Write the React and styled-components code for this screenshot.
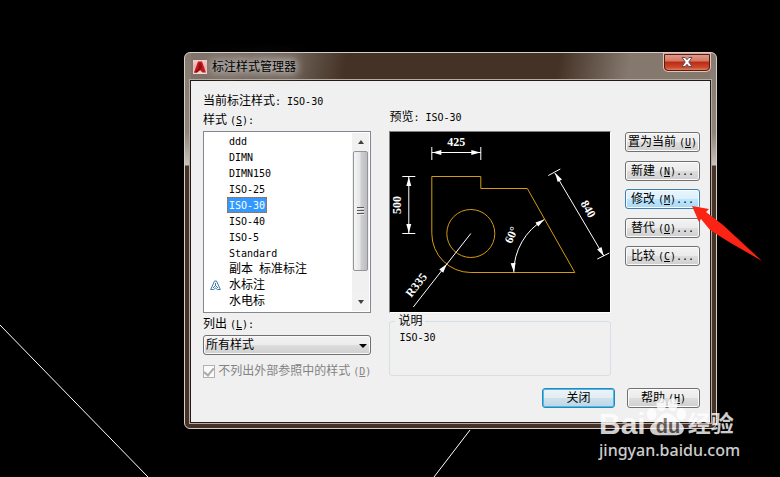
import { useState } from 'react'

import styled, { createGlobalStyle } from 'styled-components'

const styles = ["ddd","DIMN","DIMN150","ISO-25","ISO-30","ISO-40","ISO-5","Standard","副本 标准标注","水标注","水电标"]

const actions = [
  {name:"置为当前",keyName:"U"},
  {name:"新建",keyName:"N",dots:true},
  {name:"修改",keyName:"M",dots:true},
  {name:"替代",keyName:"O",dots:true},
  {name:"比较",keyName:"C",dots:true}
]

const HotKey = ({children,dots,colon}) => (
  <KeyHint>(<u>{children}</u>){dots && "..."}{colon && ":"}</KeyHint>
)

// the ascii parts of a name go in the narrow font
const Mixed = ({text}) => (
  text.split(/([\w -]+)/).map((part,i)=>(i%2 ? <Latin key={i}>{part}</Latin> : part))
)

// arrow head with its tip at x,y, pointing right before it is turned
const Head = ({x,y,angle}) => (
  <path d="M0 0L-9 -2.5V2.5Z" fill="#fff" transform={`translate(${x} ${y}) rotate(${angle})`}/>
)

const DimText = ({x,y,angle=0,children}) => (
  <text className="dim" transform={`translate(${x} ${y}) rotate(${angle})`} y="4" textAnchor="middle">{children}</text>
)

const Drawing = () => (
  <svg viewBox="0 0 219 180" role="img" aria-label="ISO-30">
    <g fill="none" stroke="#d69a10">
      <path d="M41.5 101.5V44.5H90.5V56.5H137L184.5 140.5H80.5A39 39 0 0 1 41.5 101.5Z"/>
      <circle cx="80.5" cy="101.5" r="24"/>
    </g>
    <g fill="none" stroke="#fff">
      <path d="M41.5 15V28M90.5 15V28M41.5 20.5H90.5"/>
      <path d="M12 44.5H25M12 101.5H25M18.5 44.5V101.5"/>
      <path d="M80.5 101.5L23 175"/>
      <path d="M123.5 140.5A61 61 0 0 1 154 87.5"/>
      <path d="M164.5 41L213.5 124M158 43.5L170 37M207 127L219 121"/>
    </g>
    <Head x={42} y={20.5} angle={180}/>
    <Head x={90} y={20.5} angle={0}/>
    <Head x={18.5} y={45} angle={-90}/>
    <Head x={18.5} y={101} angle={90}/>
    <Head x={56.5} y={132} angle={-52}/>
    <Head x={123.5} y={140} angle={86}/>
    <Head x={154} y={87.5} angle={-34}/>
    <Head x={165} y={41} angle={-120}/>
    <Head x={213.5} y={124} angle={60}/>
    <DimText x={66} y={10}>425</DimText>
    <DimText x={7} y={73} angle={-90}>500</DimText>
    <DimText x={26} y={153} angle={-52}>R335</DimText>
    <DimText x={121} y={103} angle={-66}>60°</DimText>
    <DimText x={198} y={77} angle={60}>840</DimText>
  </svg>
)

const App = () => {
  const [selected,setSelected] = useState("ISO-30")

  return (
    <>
    <GlobalStyle/>
    <Desktop>
      <CanvasLines width="780" height="477" aria-hidden="true">
        <path d="M0 325L148 477M470 430L434 477"/>
      </CanvasLines>

      <Dialog>
        <TitleBar>
          <svg width="14" height="14" viewBox="0 0 14 14" aria-hidden="true">
            <defs>
              <linearGradient id="logo" x1="0" y1="0" x2="0" y2="1">
                <stop offset="0" stopColor="#f3d0cd"/>
                <stop offset="0.5" stopColor="#eeb0ac"/>
                <stop offset="1" stopColor="#f0dcda"/>
              </linearGradient>
            </defs>
            <path d="M0 0H14V14H0Z" fill="url(#logo)"/>
            <path d="M5 1.5H9L13 12.5H9.5L7 10L4 12.5H1Z" fill="#c4161c"/>
            <path d="M7 2L9 7L7 10L4 12.5H1L5 9Z" fill="#8f0d12"/>
          </svg>
          <h1>标注样式管理器</h1>
          <CloseButton aria-label="关闭窗口">
            <svg width="12" height="10" viewBox="0 0 12 10">
              <path d="M1 0.5H4.2L6 2.7L7.8 0.5H11L7.8 5L11 9.5H7.8L6 7.3L4.2 9.5H1L4.2 5Z" fill="#fff" stroke="#5b4a58"/>
            </svg>
          </CloseButton>
        </TitleBar>

        <Client>
          <Columns>
            <StyleColumn>
              <Label as="p">当前标注样式<Latin>: ISO-30</Latin></Label>
              <Label as="p" id="style-label">样式<HotKey colon>S</HotKey></Label>
              <ListBox>
                <ul aria-labelledby="style-label">
                  {styles.map((name)=>(
                    <li key={name}>
                      {name==="水标注" && (
                        <svg width="11" height="11" viewBox="0 0 11 11" aria-hidden="true">
                          <path d="M4.5 1H6.5L10.3 9.5H7.5L5.500 8L3.500 9.5H0.700ZM5.500 3V6M3 8L5.500 5.500L8 8" fill="none" stroke="#3f76ac"/>
                        </svg>
                      )}
                      <StyleItem $selected={selected===name} onClick={()=>setSelected(name)}>
                        <Mixed text={name}/>
                      </StyleItem>
                    </li>
                  ))}
                </ul>
                <ScrollBar>
                  <ScrollArrow $up aria-label="向上"/>
                  <Thumb><i/><i/><i/></Thumb>
                  <ScrollArrow aria-label="向下"/>
                </ScrollBar>
              </ListBox>
              <Label htmlFor="filter">列出<HotKey colon>L</HotKey></Label>
              <SelectBox>
                <select id="filter">
                  <option>所有样式</option>
                </select>
              </SelectBox>
              <CheckLabel>
                <input type="checkbox" defaultChecked disabled/>
                <span>不列出外部参照中的样式<HotKey>D</HotKey></span>
              </CheckLabel>
            </StyleColumn>

            <PreviewColumn>
              <Label as="p">预览<Latin>: {selected}</Latin></Label>
              <Preview><Drawing/></Preview>
              <Description>
                <legend>说明</legend>
                <Mixed text={selected}/>
              </Description>
            </PreviewColumn>

            <ActionColumn>
              {actions.map((value)=>(
                <Button key={value.name} $hot={value.keyName==="M"}>
                  {value.name}<HotKey dots={value.dots}>{value.keyName}</HotKey>
                </Button>
              ))}
            </ActionColumn>
          </Columns>

          <Footer>
            <Button $focused>关闭</Button>
            <Button>帮助<HotKey>H</HotKey></Button>
          </Footer>
        </Client>
      </Dialog>

      <Pointer width="72" height="58" viewBox="0 0 72 58" aria-hidden="true">
        <path d="M1 1L18 4L15 7L32 20L71 56L38 37L19 25L10 14L8 17Z" fill="#fb2314"/>
      </Pointer>

      <Watermark>
        <Brand>
          <span>Bai</span>
          <Paw>
            <svg width="42" height="42" viewBox="0 0 44 42" aria-hidden="true">
              <g fill="#fff">
                <ellipse cx="6" cy="18" rx="5" ry="6.500"/>
                <ellipse cx="16" cy="8" rx="5" ry="7"/>
                <ellipse cx="28" cy="8" rx="5" ry="7"/>
                <ellipse cx="37" cy="18" rx="5" ry="6.500"/>
                <path d="M22 17C14 17 12 25 7 28C2 32 4 40 12 40H32C40 40 42 32 37 28C32 25 30 17 22 17Z"/>
              </g>
            </svg>
            <b>du</b>
          </Paw>
          <span>经验</span>
        </Brand>
        <Site>jingyan.baidu.com</Site>
      </Watermark>
    </Desktop>
    </>
  )
}

export default App

const GlobalStyle = createGlobalStyle`
  *{
    box-sizing: border-box;
  }
  body{
    margin: 0;
    background: #000;
    color: #000;
    font-family: "Liberation Sans", "Noto Sans CJK SC", sans-serif;
    font-size: 12px;
    line-height: 16px;
  }
  h1, p, ul{
    margin: 0;
    padding: 0;
    list-style: none;
  }
  button, select, input{
    margin: 0;
    padding: 0;
    color: inherit;
    font: inherit;
  }
`
const Desktop = styled.main`
  position: relative;
  min-height: 100vh;
  padding: 52px 63px 48px 184px;
  overflow: hidden;
`
const CanvasLines = styled.svg`
  position: absolute;
  top: 0;
  left: 0;
  stroke: #fff;
`
const Dialog = styled.section`
  position: relative;
  padding: 0 5px 5px;
  border: 1px solid #d5cec8;
  border-radius: 6px;
  background:
    linear-gradient(#877b70, #8f857b 80px, #c8c3be 112px, #463328 113px) left / 6px 100% no-repeat,
    linear-gradient(#877b70, #8f857b 80px, #c8c3be 112px, #463328 113px) right / 6px 100% no-repeat,
    linear-gradient(100deg, #81766d, #6d5f54 110px, #453226 160px, #453226 370px, #85796e 440px, #85796e) top / 100% 28px no-repeat,
    #463028;
`
const TitleBar = styled.header`
  display: flex;
  align-items: center;
  gap: 5px;
  height: 27px;
  padding-left: 3px;

  h1{
    flex: 1;
    font-size: 12px;
    font-weight: 400;
    text-shadow: 0 0 8px #ddd, 0 0 10px #ccc, 0 0 16px #bbb;
  }
`
const CloseButton = styled.button`
  display: flex;
  align-items: center;
  justify-content: center;
  align-self: flex-start;
  width: 48px;
  height: 19px;
  border: 1px solid #e8c0b4;
  border-top: 0;
  border-radius: 0 0 5px 5px;
  outline: 1px solid #4c2019;
  outline-offset: -2px;
  background: linear-gradient(#e6a597, #d57561 45%, #b92a13 50%, #cc4a2d 80%, #e69070);
`
const Client = styled.div`
  padding: 12px 10px 14px 12px;
  border: 1px solid #241a15;
  outline: 1px solid #b5aaa4;
  background: #f0f0f0;
`
const Latin = styled.span`
  font-family: "DejaVu Sans Mono", monospace;
  font-size: 10px;
  white-space: pre;
`
const KeyHint = styled(Latin)`
  margin-left: 3px;
`
const Columns = styled.div`
  display: grid;
  grid-template-columns: 168fr 253fr 75px;
`
const Column = styled.div`
  display: flex;
  flex-direction: column;
  min-width: 0;
`
const StyleColumn = styled(Column)`
  gap: 3px;
`
const PreviewColumn = styled(Column)`
  padding: 16px 14px 0 18px;
  gap: 6px;
`
const ActionColumn = styled(Column)`
  justify-content: space-between;
  height: 173px;
  padding-top: 39px;
`
const Label = styled.label`
  display: block;
  height: 16px;
  white-space: nowrap;
`
const ListBox = styled.div`
  display: flex;
  justify-content: space-between;
  height: 182px;
  padding: 1px;
  border: 1px solid #828790;
  background: #fff;

  li{
    position: relative;
    height: 16px;
    padding-left: 22px;
  }
  li svg{
    position: absolute;
    top: 3px;
    left: 5px;
  }
`
const StyleItem = styled.button`
  display: block;
  height: 16px;
  padding: 0 2px;
  border: 0;
  line-height: 16px;
  white-space: nowrap;
  background: ${({$selected}) =>($selected ? "#3399ff" : "transparent")};
  color: ${({$selected}) =>($selected ? "#fff" : "#000")};
  outline: ${({$selected}) =>($selected ? "1px dotted #c46000" : "none")};
  outline-offset: -1px;
`
const ScrollBar = styled.div`
  display: flex;
  flex-direction: column;
  width: 17px;
  background: #f0f0f0;
`
const ScrollArrow = styled.button`
  display: flex;
  align-items: center;
  justify-content: center;
  height: 18px;
  border: 0;
  background: #f1f1f1;

  &::after{
    content: "";
    border: 3px solid transparent;
    border-top-width: ${({$up}) =>($up ? "0" : "4px")};
    border-bottom-width: ${({$up}) =>($up ? "4px" : "0")};
    border-top-color: #404040;
    border-bottom-color: #404040;
  }
`
const Thumb = styled.div`
  display: flex;
  flex-direction: column;
  align-items: center;
  justify-content: center;
  gap: 1px;
  height: 120px;
  margin: 0 1px auto;
  border: 1px solid #949494;
  border-radius: 2px;
  background: linear-gradient(90deg, #f5f5f5, #e6e6e8 45%, #cdced1 55%, #bcbdc1);

  i{
    width: 7px;
    height: 2px;
    border-top: 1px solid #555;
    background: #eee;
  }
`
const SelectBox = styled.div`
  position: relative;

  select{
    display: block;
    width: 100%;
    height: 20px;
    padding: 0 2px;
    appearance: none;
    border: 1px solid #707070;
    border-radius: 3px;
    background: linear-gradient(#f2f2f2, #ebebeb 50%, #dddddd 51%, #cfcfcf);
    box-shadow: inset 0 0 0 1px #f8f8f8;
  }
  &::after{
    content: "";
    position: absolute;
    top: 9px;
    right: 4px;
    border: 4px solid transparent;
    border-top-color: #000;
    border-bottom: 0;
    pointer-events: none;
  }
`
const CheckLabel = styled.label`
  display: flex;
  align-items: center;
  gap: 3px;
  height: 16px;
  margin-top: 5px;
  color: #838383;
  white-space: nowrap;

  input{
    display: flex;
    justify-content: center;
    width: 13px;
    height: 13px;
    appearance: none;
    border: 1px solid #b1b1b1;
    background: #fafafa;
  }
  input::after{
    content: "";
    width: 4px;
    height: 8px;
    border: solid #aaa;
    border-width: 0 2px 2px 0;
    transform: rotate(40deg);
  }
`
const Preview = styled.div`
  height: 182px;
  border: 1px solid #808080;
  border-right-color: #fff;
  border-bottom-color: #fff;
  background: #000;

  svg{
    display: block;
    width: 100%;
    height: 100%;
  }
  .dim{
    fill: #fff;
    font-family: "Liberation Serif", serif;
    font-size: 12px;
    font-weight: 700;
  }
`
const Description = styled.fieldset`
  height: 63px;
  min-width: 0;
  margin: -6px 0 0;
  padding: 0 9px;
  border: 1px solid #d5dfe5;
  border-radius: 3px;

  legend{
    margin-left: -4px;
    padding: 0 3px;
  }
`
const buttonFace = ({$hot,$focused}) => {
  if($hot) return "linear-gradient(#eaf6fd, #d9f0fc 50%, #bee6fd 51%, #a7d9f5)"
  if($focused) return "linear-gradient(#eef3f7, #e2edf4 50%, #cfe1ec 51%, #bcd6e6)"
  return "linear-gradient(#f2f2f2, #ebebeb 50%, #dddddd 51%, #cfcfcf)"
}
const Button = styled.button`
  height: 20px;
  border: 1px solid ${({$hot,$focused}) =>($hot || $focused ? "#3c7fb1" : "#707070")};
  border-radius: 3px;
  background: ${buttonFace};
  box-shadow: inset 0 0 0 1px ${({$focused}) =>($focused ? "#35c5f5" : "#fbfbfb")};
  line-height: 18px;
  white-space: nowrap;
`
const Footer = styled.footer`
  display: flex;
  justify-content: flex-end;
  gap: 12px;
  margin-top: 9px;

  button{
    width: 73px;
  }
`
const Pointer = styled.svg`
  position: absolute;
  top: 205px;
  right: 17px;
`
const Watermark = styled.div`
  position: absolute;
  right: 42px;
  bottom: 15px;
  width: 139px;
  color: #fff;
  opacity: 0.8;
  pointer-events: none;
`
const Brand = styled.div`
  display: flex;
  align-items: flex-end;
  height: 43px;
  font-size: 23px;
  font-weight: 700;
  line-height: 28px;
  white-space: nowrap;

  > span:first-child{
    font-size: 30px;
  }
`
const Paw = styled.div`
  position: relative;

  svg{
    display: block;
  }
  b{
    position: absolute;
    left: 10px;
    bottom: 0;
    color: #6a625d;
    font-size: 20px;
    line-height: 24px;
  }
`
const Site = styled.div`
  font-family: "Noto Sans", sans-serif;
  font-size: 16px;
  font-weight: 500;
  line-height: 24px;
`
